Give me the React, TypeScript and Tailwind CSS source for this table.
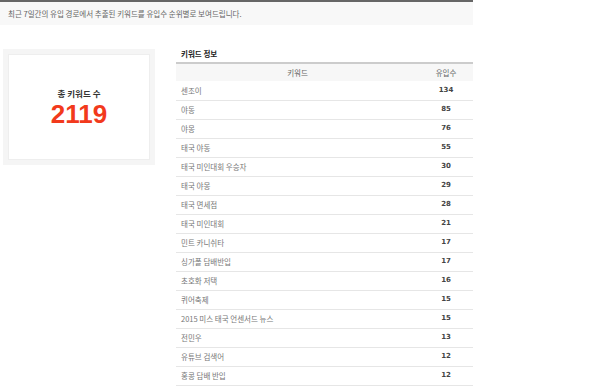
import React from "react";

interface Keyword {
  name: string;
  count: number;
}

const keywords: Keyword[] = [
  { name: "센조이", count: 134 },
  { name: "야동", count: 85 },
  { name: "야몽", count: 76 },
  { name: "태국 야동", count: 55 },
  { name: "태국 미인대회 우승자", count: 30 },
  { name: "태국 야몽", count: 29 },
  { name: "태국 면세점", count: 28 },
  { name: "태국 미인대회", count: 21 },
  { name: "민트 카니쉬타", count: 17 },
  { name: "싱가폴 담배반입", count: 17 },
  { name: "초호화 저택", count: 16 },
  { name: "퀴어축제", count: 15 },
  { name: "2015 미스 태국 언센서드 뉴스", count: 15 },
  { name: "전민우", count: 13 },
  { name: "유튜브 검색어", count: 12 },
  { name: "홍콩 담배 반입", count: 12 },
];

const kr = "font-['Noto_Sans_CJK_KR',sans-serif]";

const App: React.FC = () => {
  return (
    <div className={`w-[600px] h-[386px] bg-white overflow-hidden ${kr}`}>
      <div className="w-[473px] h-[25px] border-t-2 border-[#666] bg-[#f8f8f8] pl-2 flex items-center text-[7.5px] text-[#666]">
        최근 7일간의 유입 경로에서 추출된 키워드를 유입수 순위별로 보여드립니다.
      </div>

      <div className="flex w-[473px] mt-6">
        {/* total card */}
        <div className="ml-[3px] w-[152px] h-[116px] bg-[#f5f5f5] p-[5px] shrink-0">
          <div className="h-full bg-white border border-[#eee] flex flex-col items-center justify-center pt-[2px]">
            <div className="text-[8.5px] font-bold text-[#333] leading-none">총 키워드 수</div>
            <div className="mt-[4px] text-[26px] font-bold text-[#f23a1c] leading-none font-['Liberation_Sans',sans-serif]">
              2119
            </div>
          </div>
        </div>

        {/* keyword table */}
        <div className="ml-[21px] flex-1">
          <h3 className="pl-[5px] text-[7.5px] font-bold text-[#222] leading-[9px] mb-[4px]">키워드 정보</h3>
          <table className="w-full border-collapse border-t-2 border-[#ccc]">
            <thead>
              <tr className="bg-[#f7f7f7] h-[18px]">
                <th className="text-[7.5px] font-normal text-[#666]">키워드</th>
                <th className="w-[54px] text-[7.5px] font-normal text-[#666]">유입수</th>
              </tr>
            </thead>
            <tbody>
              {keywords.map((k, i) => (
                <tr key={i} className="h-[19px] border-b border-[#e6e6e6]">
                  <td className="pl-[5px] text-[7.5px] text-[#777]">{k.name}</td>
                  <td className="text-center text-[7px] font-bold text-[#444] font-['DejaVu_Sans',sans-serif]">
                    {k.count}
                  </td>
                </tr>
              ))}
            </tbody>
          </table>
        </div>
      </div>
    </div>
  );
};

export default App;
